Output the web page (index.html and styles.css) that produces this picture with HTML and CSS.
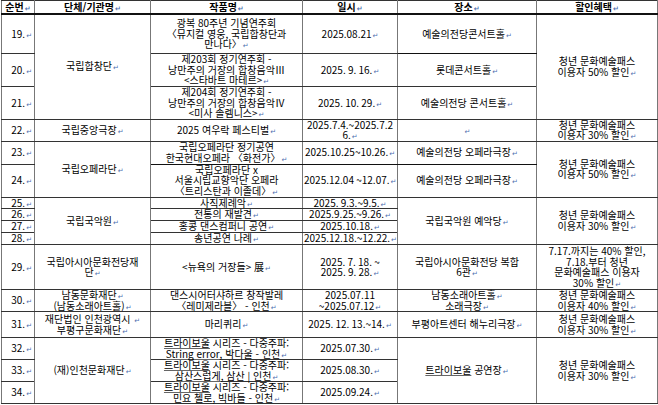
FILE: index.html
```html
<!DOCTYPE html>
<html lang="ko">
<head>
<meta charset="utf-8">
<link rel="stylesheet" href="styles.css">
</head>
<body>
<table class="tbl">
<colgroup>
<col class="c-no"><col class="c-org"><col class="c-work"><col class="c-date"><col class="c-place"><col class="c-dc">
</colgroup>
<thead>
<tr class="h-head">
<th>순번<span class="pm">↵</span></th>
<th>단체/기관명<span class="pm">↵</span></th>
<th>작품명<span class="pm">↵</span></th>
<th>일시<span class="pm">↵</span></th>
<th>장소<span class="pm">↵</span></th>
<th>할인혜택<span class="pm">↵</span></th>
</tr>
</thead>
<tbody>
<tr class="h40">
<td class="no">19.<span class="pm">↵</span></td>
<td rowspan="3">국립합창단<span class="pm">↵</span></td>
<td>광복 80주년 기념연주회<br>〈뮤지컬 영웅, 국립합창단과<br>만나다〉<span class="pm">↵</span></td>
<td>2025.08.21<span class="pm">↵</span></td>
<td class="thick-b">예술의전당콘서트홀<span class="pm">↵</span></td>
<td rowspan="3">청년 문화예술패스<br>이용자 50% 할인<span class="pm">↵</span></td>
</tr>
<tr class="h33">
<td class="no">20.<span class="pm">↵</span></td>
<td>제203회 정기연주회 -<br>낭만주의 거장의 합창음악Ⅲ<br>&lt;스타바트 마테르&gt;<span class="pm">↵</span></td>
<td>2025. 9. 16.<span class="pm">↵</span></td>
<td>롯데콘서트홀<span class="pm">↵</span></td>
</tr>
<tr class="h32">
<td class="no">21.<span class="pm">↵</span></td>
<td>제204회 정기연주회 -<br>낭만주의 거장의 합창음악Ⅳ<br>&lt;미사 솔렘니스&gt;<span class="pm">↵</span></td>
<td>2025. 10. 29.<span class="pm">↵</span></td>
<td>예술의전당 콘서트홀<span class="pm">↵</span></td>
</tr>
<tr class="h22">
<td class="no">22.<span class="pm">↵</span></td>
<td>국립중앙극장<span class="pm">↵</span></td>
<td>2025 여우락 페스티벌<span class="pm">↵</span></td>
<td>2025.7.4.~2025.7.2<br>6.<span class="pm">↵</span></td>
<td><span class="pm">↵</span></td>
<td>청년 문화예술패스<br>이용자 30% 할인<span class="pm">↵</span></td>
</tr>
<tr class="h23">
<td class="no">23.<span class="pm">↵</span></td>
<td rowspan="2">국립오페라단<span class="pm">↵</span></td>
<td class="thick-b">국립오페라단 정기공연<br>한국현대오페라 〈화전가〉<span class="pm">↵</span></td>
<td class="thick-b">2025.10.25~10.26.<span class="pm">↵</span></td>
<td class="thick-b">예술의전당 오페라극장<span class="pm">↵</span></td>
<td rowspan="2">청년 문화예술패스<br>이용자 50% 할인<span class="pm">↵</span></td>
</tr>
<tr class="h33">
<td class="no">24.<span class="pm">↵</span></td>
<td>국립오페라단 x<br>서울시립교향악단 오페라<br>〈트리스탄과 이졸데〉<span class="pm">↵</span></td>
<td>2025.12.04 ~12.07.<span class="pm">↵</span></td>
<td>예술의전당 오페라극장<span class="pm">↵</span></td>
</tr>
<tr class="h11">
<td class="no">25.<span class="pm">↵</span></td>
<td rowspan="4">국립국악원<span class="pm">↵</span></td>
<td>사직제례악<span class="pm">↵</span></td>
<td>2025. 9.3.~9.5.<span class="pm">↵</span></td>
<td rowspan="4">국립국악원 예악당<span class="pm">↵</span></td>
<td rowspan="4">청년 문화예술패스<br>이용자 30% 할인<span class="pm">↵</span></td>
</tr>
<tr class="h12">
<td class="no">26.<span class="pm">↵</span></td>
<td>전통의 재발견<span class="pm">↵</span></td>
<td>2025.9.25.~9.26.<span class="pm">↵</span></td>
</tr>
<tr class="h12">
<td class="no">27.<span class="pm">↵</span></td>
<td>홍콩 댄스컴퍼니 공연<span class="pm">↵</span></td>
<td>2025.10.18.<span class="pm">↵</span></td>
</tr>
<tr class="h12">
<td class="no">28.<span class="pm">↵</span></td>
<td>송년공연 나례<span class="pm">↵</span></td>
<td>2025.12.18.~12.22.<span class="pm">↵</span></td>
</tr>
<tr class="h45">
<td class="no">29.<span class="pm">↵</span></td>
<td>국립아시아문화전당재<br>단<span class="pm">↵</span></td>
<td>&lt;뉴욕의 거장들&gt; 展<span class="pm">↵</span></td>
<td>2025. 7. 18. ~<br>2025. 9. 28.<span class="pm">↵</span></td>
<td>국립아시아문화전당 복합<br>6관<span class="pm">↵</span></td>
<td>7.17.까지는 40% 할인,<br>7.18.부터 청년<br>문화예술패스 이용자<br>30% 할인<span class="pm">↵</span></td>
</tr>
<tr class="h22">
<td class="no">30.<span class="pm">↵</span></td>
<td>남동문화재단<span class="pm">↵</span><br>(남동소래아트홀)<span class="pm">↵</span></td>
<td>댄스시어터샤하르 창작발레<br>〈레미제라블〉 - 인천<span class="pm">↵</span></td>
<td>2025.07.11<br>~2025.07.12<span class="pm">↵</span></td>
<td>남동소래아트홀<span class="pm">↵</span><br>소래극장<span class="pm">↵</span></td>
<td>청년 문화예술패스<br>이용자 40% 할인<span class="pm">↵</span></td>
</tr>
<tr class="h26">
<td class="no">31.<span class="pm">↵</span></td>
<td>재단법인 인천광역시 <span class="pm">↵</span><br>부평구문화재단<span class="pm">↵</span></td>
<td>마리퀴리<span class="pm">↵</span></td>
<td>2025. 12. 13.~14.<span class="pm">↵</span></td>
<td>부평아트센터 해누리극장<span class="pm">↵</span></td>
<td>청년 문화예술패스<br>이용자 30% 할인<span class="pm">↵</span></td>
</tr>
<tr class="h22">
<td class="no">32.<span class="pm">↵</span></td>
<td rowspan="3">(재)인천문화재단<span class="pm">↵</span></td>
<td><span class="ul">트라이보울</span> 시리즈 - 다중주파:<br><span class="ul">String error</span>, 박다울 - 인천<span class="pm">↵</span></td>
<td>2025.07.30.<span class="pm">↵</span></td>
<td rowspan="3"><span class="ul">트라이보울</span> 공연장<span class="pm">↵</span></td>
<td rowspan="3">청년 문화예술패스<br>이용자 30% 할인<span class="pm">↵</span></td>
</tr>
<tr class="h22">
<td class="no">33.<span class="pm">↵</span></td>
<td><span class="ul">트라이보울</span> 시리즈 - 다중주파:<br><span class="ul">삼산스럽게</span>, 삼산 | 인천<span class="pm">↵</span></td>
<td>2025.08.30.<span class="pm">↵</span></td>
</tr>
<tr class="h22">
<td class="no">34.<span class="pm">↵</span></td>
<td><span class="ul">트라이보울</span> 시리즈 - 다중주파:<br>민요 첼로, 빅바들 - 인천<span class="pm">↵</span></td>
<td>2025.09.24.<span class="pm">↵</span></td>
</tr>
</tbody>
</table>
</body>
</html>
```

FILE: styles.css
```css
html, body {
  margin: 0;
  padding: 0;
  background: #ffffff;
}
body {
  padding: 0 0 0 1px;
  font-family: "Noto Sans CJK KR", "Noto Sans", sans-serif;
  font-size: 10px;
  line-height: 10.5px;
  color: #000000;
}
.tbl {
  border-collapse: collapse;
  table-layout: fixed;
  width: 656px;
  border: 1.5px solid #222;
}
.c-no { width: 33px; }
.c-org { width: 116px; }
.c-work { width: 152px; }
.c-date { width: 95px; }
.c-place { width: 139px; }
.c-dc { width: 121px; }
.tbl th, .tbl td {
  border-top: 1px solid #333;
  border-bottom: 1px solid #333;
  border-left: 1px solid #777;
  border-right: 1px solid #777;
  padding: 0 1px;
  text-align: center;
  vertical-align: middle;
  white-space: nowrap;
  line-height: 10.5px;
}
.tbl th {
  font-weight: bold;
  border-bottom: 2px solid #111;
}
.tbl td.no {
  text-align: right;
  padding-right: 2px;
}
.tbl td.thick-b {
  border-bottom: 1.5px solid #111;
}
.pm {
  font-family: "DejaVu Sans", sans-serif;
  font-size: 7px;
  line-height: 0;
  color: #4d6fb0;
  margin-left: 1px;
}
.ul {
  text-decoration: underline;
  text-decoration-color: #666;
}
.h-head { height: 13px; }
.h40 { height: 40px; }
.h33 { height: 33px; }
.h32 { height: 32px; }
.h22 { height: 22px; }
.h23 { height: 23px; }
.h26 { height: 26px; }
.h45 { height: 45px; }
.h11 { height: 11px; }
.h12 { height: 12px; }
```
